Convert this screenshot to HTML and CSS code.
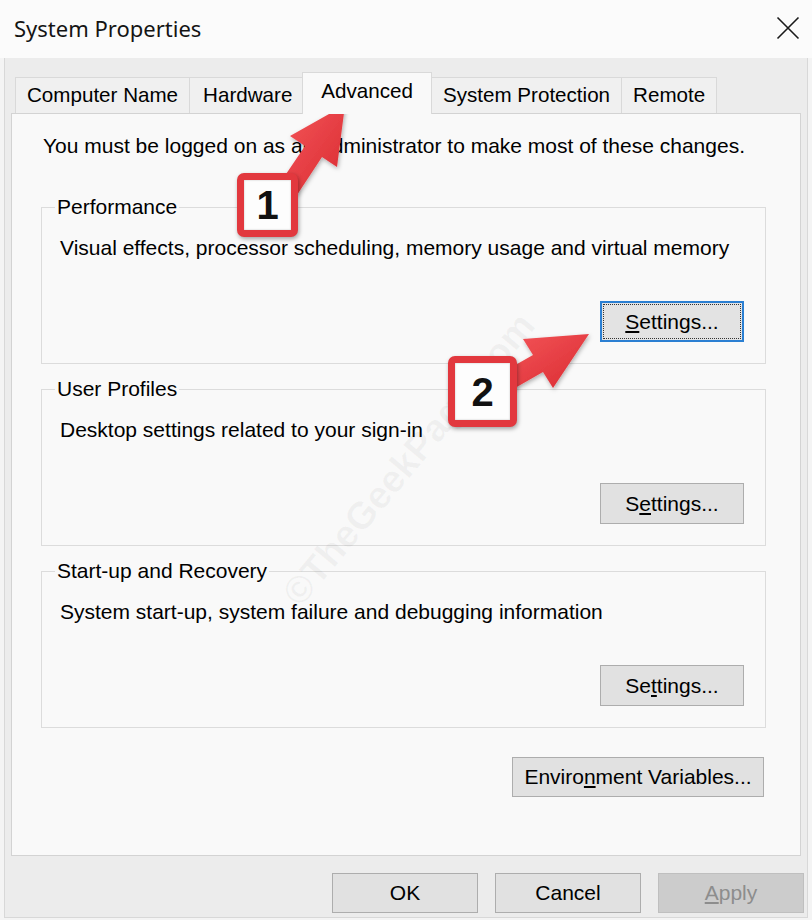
FILE: index.html
```html
<!DOCTYPE html>
<html lang="en">
<head>
<meta charset="utf-8">
<title>System Properties</title>
<link rel="stylesheet" href="styles.css">
</head>
<body>
<div class="titlebar">
  <span class="title">System Properties</span>
  <svg class="close" viewBox="0 0 24 24" width="24" height="24"><path d="M1.5 1.5 L22.5 22.5 M22.5 1.5 L1.5 22.5" stroke="#1a1a1a" stroke-width="1.6" fill="none"/></svg>
</div>
<div class="frame">
  <div class="tabs">
    <div class="tab">Computer Name</div>
    <div class="tab hw">Hardware</div>
    <div class="tab active">Advanced</div>
    <div class="tab">System Protection</div>
    <div class="tab">Remote</div>
  </div>
  <div class="panel">
    <div class="intro">You must be logged on as an administrator to make most of these changes.</div>
    <fieldset class="group">
      <legend>Performance</legend>
      <div class="desc">Visual effects, processor scheduling, memory usage and virtual memory</div>
      <div class="btn-row"><button class="btn settings focus"><u>S</u>ettings...</button></div>
    </fieldset>
    <fieldset class="group">
      <legend>User Profiles</legend>
      <div class="desc">Desktop settings related to your sign-in</div>
      <div class="btn-row"><button class="btn settings">S<u>e</u>ttings...</button></div>
    </fieldset>
    <fieldset class="group">
      <legend>Start-up and Recovery</legend>
      <div class="desc">System start-up, system failure and debugging information</div>
      <div class="btn-row"><button class="btn settings">Se<u>t</u>tings...</button></div>
    </fieldset>
    <div class="env-row"><button class="btn env">Enviro<u>n</u>ment Variables...</button></div>
  </div>
  <div class="footer">
    <button class="btn foot">OK</button>
    <button class="btn foot">Cancel</button>
    <button class="btn foot disabled"><u>A</u>pply</button>
  </div>
</div>

<div class="watermark">©TheGeekPage.com</div>

<svg class="marks" width="812" height="920" viewBox="0 0 812 920">
  <defs>
    <linearGradient id="red" x1="0" y1="0" x2="1" y2="1">
      <stop offset="0" stop-color="#f5575b"/>
      <stop offset="1" stop-color="#d92a30"/>
    </linearGradient>
    <filter id="sh" x="-20%" y="-20%" width="140%" height="140%">
      <feDropShadow dx="1" dy="2" stdDeviation="2" flood-color="#000" flood-opacity="0.3"/>
    </filter>
  </defs>
  <polygon filter="url(#sh)" fill="url(#red)" points="345,105 337,167 322,157 297,195 280,183 305,146 290,136"/>
  <polygon filter="url(#sh)" fill="url(#red)" points="589,334 553,388 543,372 508,392 498,375 533,355 523,339"/>
</svg>

<div class="badge b1">1</div>
<div class="badge b2">2</div>
</body>
</html>
```
FILE: styles.css
```css
* { box-sizing: border-box; }
html, body { margin: 0; padding: 0; }
body {
  width: 812px;
  height: 920px;
  background: #f4f4f4;
  font-family: "Liberation Sans", Arial, sans-serif;
  font-size: 21px;
  color: #000;
  position: relative;
  overflow: hidden;
}
.titlebar {
  height: 58px;
  background: #fbfbfb;
  display: flex;
  align-items: center;
  justify-content: space-between;
  padding: 0 12px 2px 14px;
}
.title {
  font-family: "Noto Sans", "Liberation Sans", sans-serif;
  font-size: 22px;
  color: #141414;
}
.close { display: block; }

.frame {
  margin: 0 4px;
  height: 860px;
  border: 1px solid #d8d8d8;
  border-top: none;
  background: #ececec;
  padding: 14px 3px 4px 0;
}
.tabs {
  display: flex;
  align-items: flex-end;
  height: 41px;
  padding-left: 10px;
  font-size: 20.6px;
}
.tab {
  height: 36px;
  padding: 0 11px 1px;
  display: flex;
  align-items: center;
  background: #f0f0f0;
  border: 1px solid #d9d9d9;
  border-bottom: none;
  margin-right: -1px;
  white-space: nowrap;
}
.tab.hw { padding: 0 12px 1px 13px; }
.tab.active {
  position: relative;
  z-index: 1;
  height: 42px;
  margin: 0 -1px -1px -2px;
  padding: 0 18px 6px 18px;
  background: #f9f9f9;
}
.panel {
  margin: 0 3px 0 6px;
  background: #f9f9f9;
  border: 1px solid #d3d3d3;
  padding: 20px 0 58px 0;
}
.intro {
  line-height: 24px;
  padding-left: 31px;
  white-space: nowrap;
}
.group {
  margin: 37px 34px 0 29px;
  border: 1px solid #dcdcdc;
  padding: 0 21px 21px 18px;
  min-width: 0;
}
.group + .group { margin-top: 13px; }
.group legend {
  line-height: 24px;
  padding: 0 2px;
  margin-left: -5px;
}
.desc {
  margin-top: 17px;
  line-height: 24px;
  white-space: nowrap;
}
.btn-row {
  display: flex;
  justify-content: flex-end;
  margin-top: 41px;
}
.btn {
  font: inherit;
  color: #000;
  background: #e1e1e1;
  border: 1px solid #adadad;
  display: flex;
  align-items: center;
  justify-content: center;
  padding: 0;
  margin: 0;
  white-space: nowrap;
}
.btn u { text-underline-offset: 2px; }
.settings { width: 144px; height: 41px; }
.focus {
  position: relative;
  border: 2px solid #2b7fd2;
  background: #e3e3e3;
}
.focus::after {
  content: "";
  position: absolute;
  inset: 1px;
  border: 1px dotted #333;
}
.env-row {
  display: flex;
  justify-content: flex-end;
  margin: 29px 36px 0 0;
}
.env { width: 252px; height: 40px; }
.footer {
  display: flex;
  justify-content: flex-end;
  gap: 17px;
  margin-top: 17px;
}
.foot { width: 146px; height: 40px; }
.disabled {
  background: #cccccc;
  border-color: #bfbfbf;
  color: #8d8d8d;
}

.watermark {
  position: absolute;
  left: 226px;
  top: 440px;
  width: 360px;
  line-height: 44px;
  text-align: center;
  font-size: 38px;
  font-weight: bold;
  color: rgba(90, 90, 90, 0.06);
  transform: rotate(-50deg);
  white-space: nowrap;
}
.marks {
  position: absolute;
  left: 0;
  top: 0;
  pointer-events: none;
}
.badge {
  position: absolute;
  display: flex;
  align-items: center;
  justify-content: center;
  background: #fdfdfd;
  border: 7px solid #e2383e;
  border-radius: 7px;
  box-shadow: 1px 2px 4px rgba(0, 0, 0, 0.35), inset 0 0 2px rgba(0, 0, 0, 0.25);
  font-family: "Liberation Sans", Arial, sans-serif;
  font-weight: bold;
  font-size: 40px;
  line-height: 1;
  color: #111;
}
.b1 { left: 237px; top: 173px; width: 61px; height: 64px; }
.b2 { left: 448px; top: 356px; width: 69px; height: 71px; }
```
